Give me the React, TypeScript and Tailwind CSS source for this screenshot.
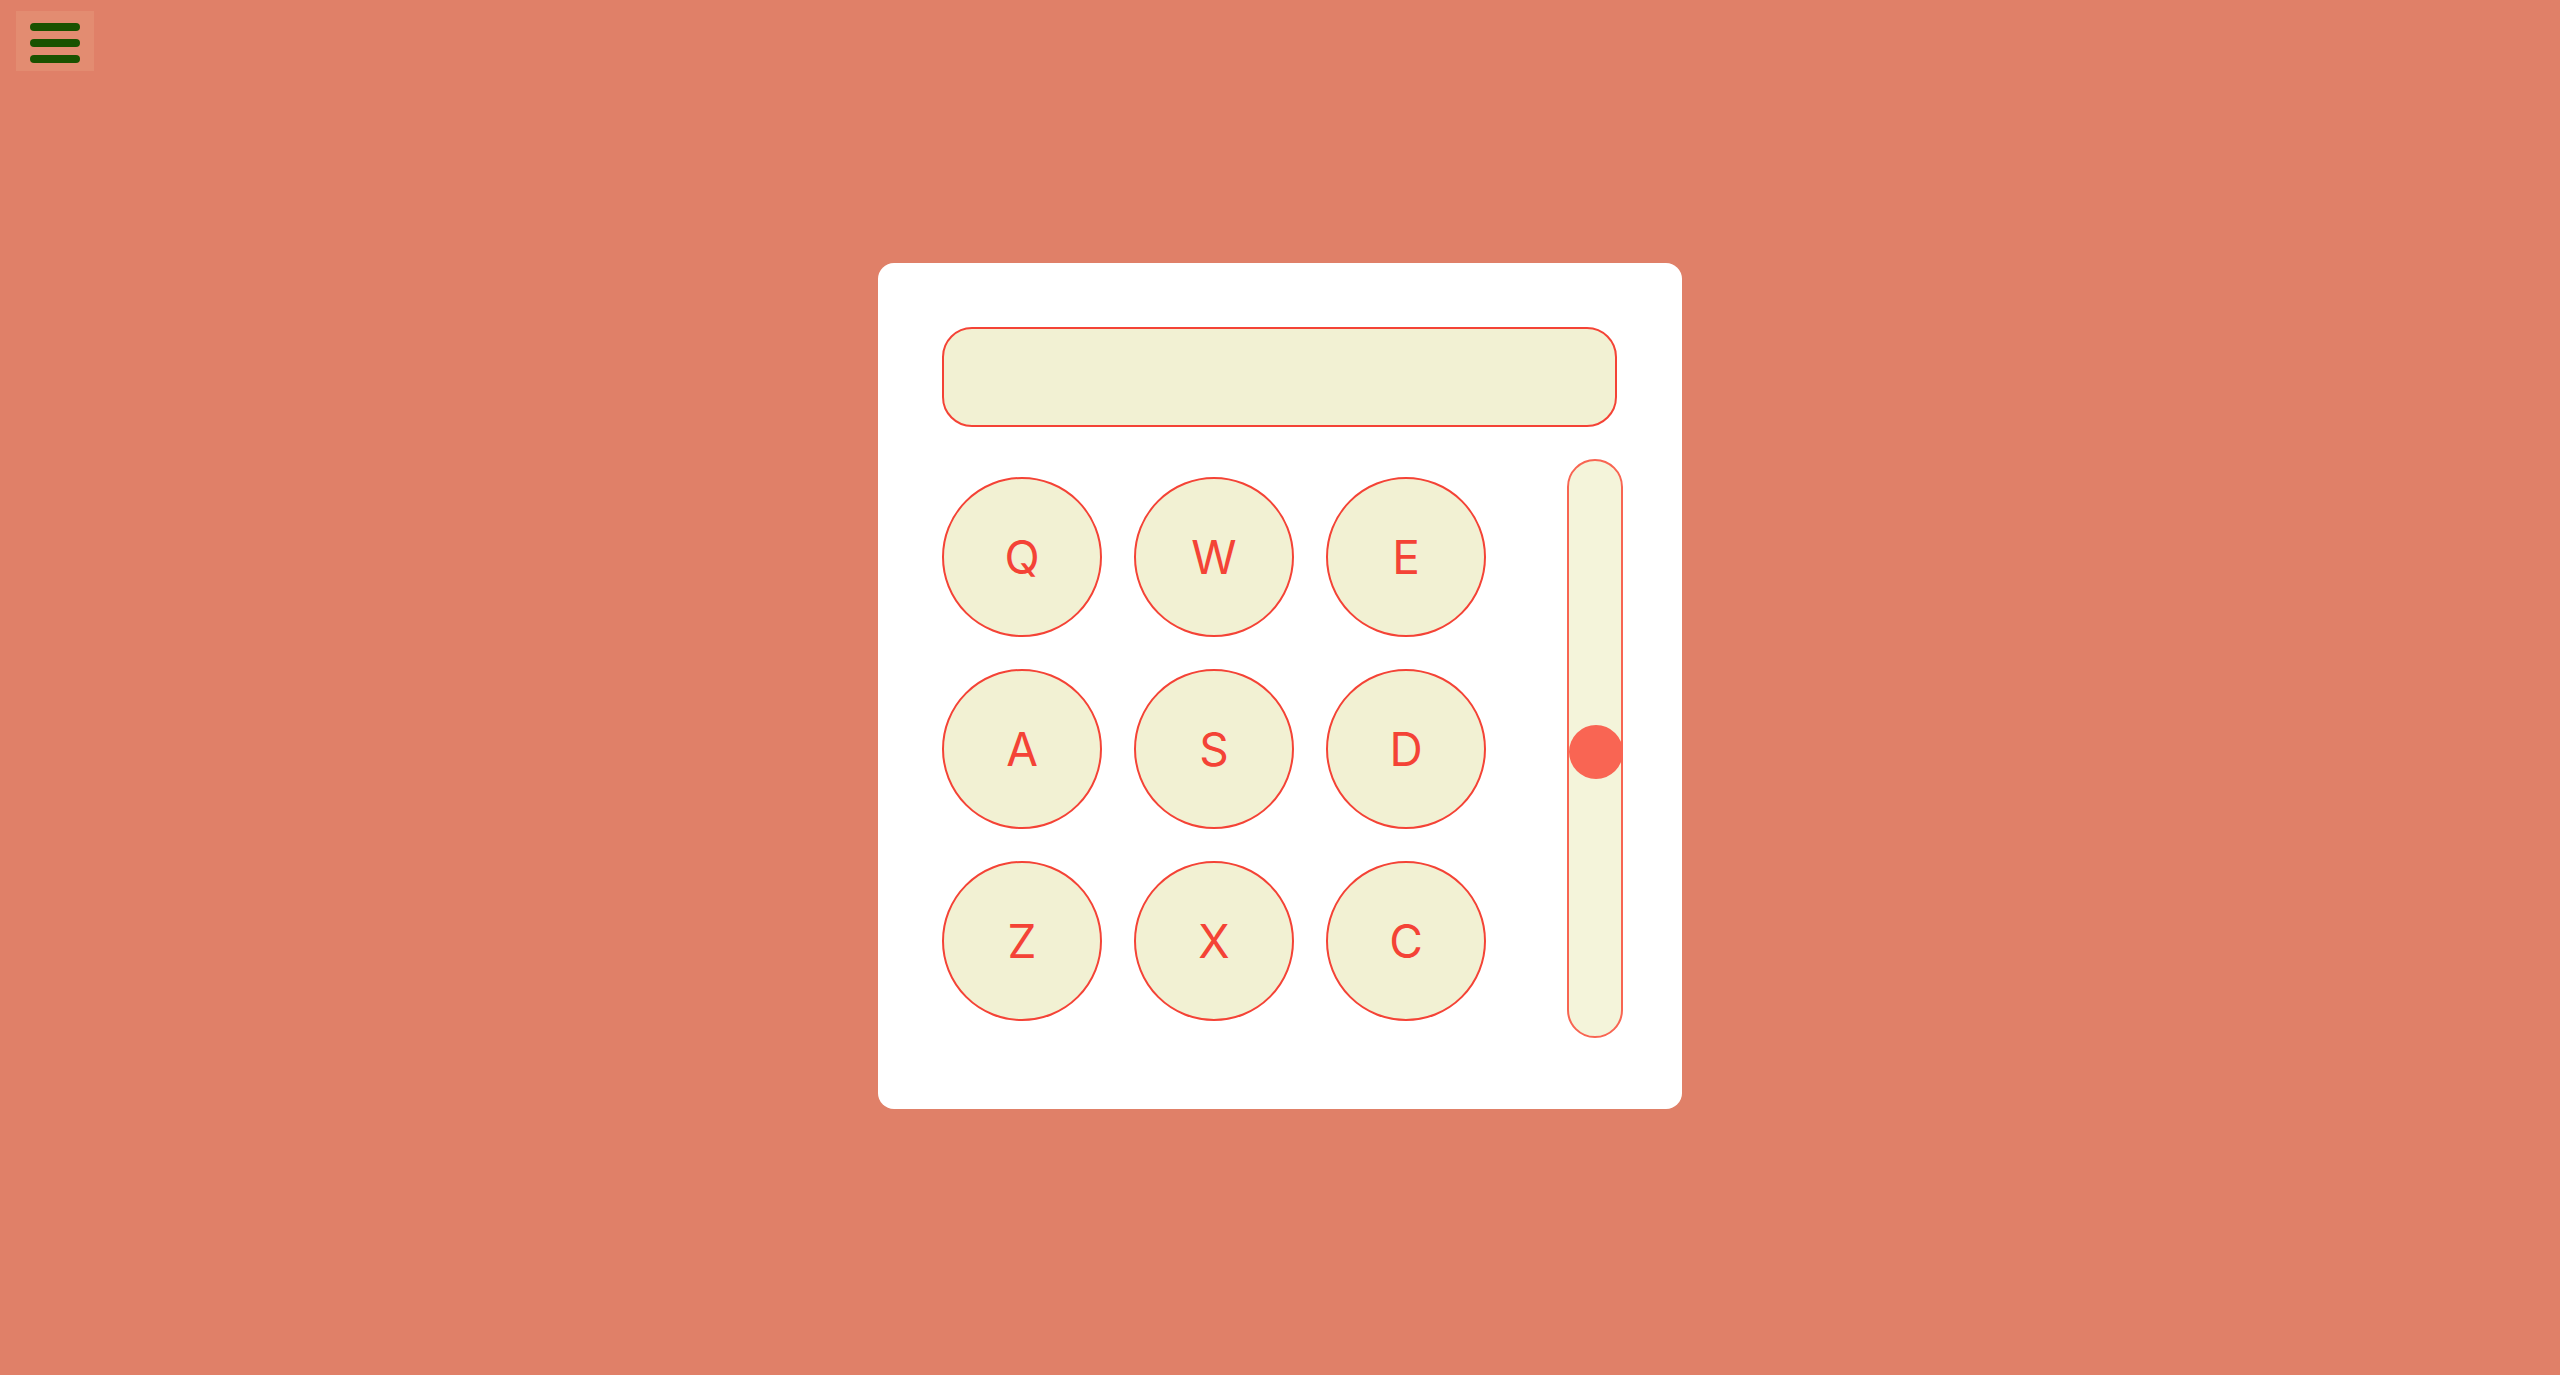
import React from "react";

const keys = ["Q", "W", "E", "A", "S", "D", "Z", "X", "C"];

export default function App() {
  return (
    <div className="relative w-full h-[1375px] bg-[#e08068] flex items-center justify-center pb-[3px]" style={{ fontFamily: "Inter, 'Noto Sans', sans-serif" }}>
      <button className="absolute left-[16px] top-[11px] w-[78px] h-[60px] bg-[#e38c71] flex flex-col items-center justify-center gap-[8px] pt-[4px]">
        <span className="block w-[50px] h-[8px] rounded-full bg-[#1a5200]" />
        <span className="block w-[50px] h-[8px] rounded-full bg-[#1a5200]" />
        <span className="block w-[50px] h-[8px] rounded-full bg-[#1a5200]" />
      </button>
      <div className="w-[804px] h-[846px] bg-white rounded-[16px] pt-16 pl-16 flex flex-col">
        <div className="w-[675px] h-[100px] rounded-[30px] border-2 border-[#f44336] bg-[#f2f1d3]" />
        <div className="mt-[32px] flex items-center">
          <div className="grid grid-cols-3 gap-[32px] w-[544px]">
            {keys.map((k) => (
              <button
                key={k}
                className="w-[160px] h-[160px] rounded-full border-2 border-[#f44336] bg-[#f2f1d3] text-[#f44336] text-[46px] leading-none flex items-center justify-center"
              >
                {k}
              </button>
            ))}
          </div>
          <div className="ml-[81px] relative w-[56px] h-[579px] rounded-full border-2 border-[#f86552] bg-[#f4f4da]">
            <div className="absolute left-[0px] top-[264px] w-[54px] h-[54px] rounded-full bg-[#f96553]" />
          </div>
        </div>
      </div>
    </div>
  );
}
